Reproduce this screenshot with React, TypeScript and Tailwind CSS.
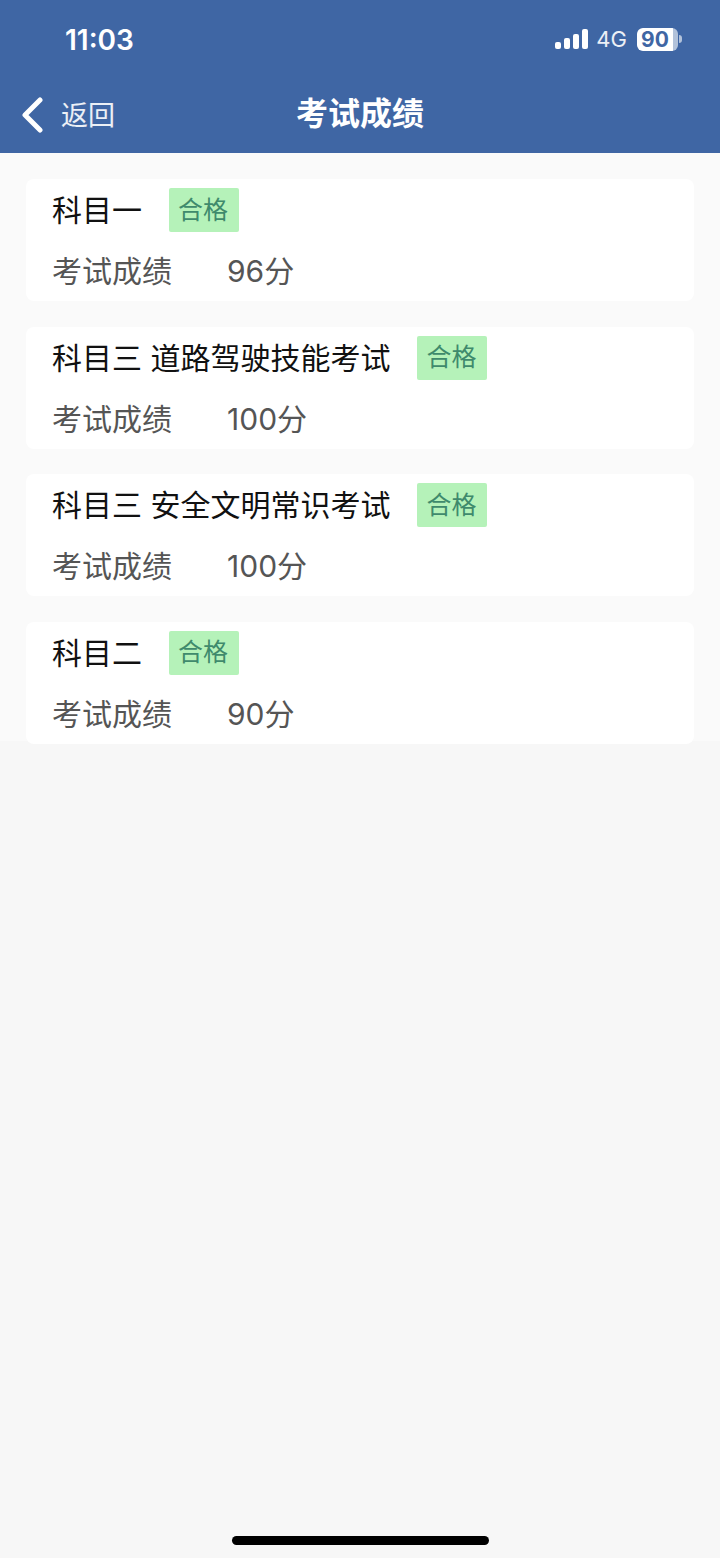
const results = [
  { name: '科目一', score: '96' },
  { name: '科目三 道路驾驶技能考试', score: '100' },
  { name: '科目三 安全文明常识考试', score: '100' },
  { name: '科目二', score: '90' },
]

const font = { fontFamily: 'Inter, "Noto Sans CJK SC", sans-serif' }

function StatusBar() {
  return (
    <div className="flex h-[78px] items-center justify-between pl-[65px] pr-[38px] text-white">
      <span className="pt-[2px] text-[28px] font-semibold leading-none">11:03</span>
      <div className="flex items-center">
        <svg width="33" height="20" viewBox="0 0 33 20" fill="white">
          <rect x="0" y="13" width="6" height="7" rx="2" />
          <rect x="9" y="9" width="6" height="11" rx="2" />
          <rect x="18" y="5" width="6" height="15" rx="2" />
          <rect x="27" y="0" width="6" height="20" rx="2" />
        </svg>
        <span className="ml-[8px] text-[22px] leading-none text-white/90">4G</span>
        <div className="relative ml-[10px] flex h-[23px] w-[41px] items-center overflow-hidden rounded-[6px] bg-white/60">
          <div className="flex h-full w-[36px] items-center justify-center rounded-l-[6px] bg-white">
            <span className="text-[21px] font-bold leading-none text-[#3f66a4]">90</span>
          </div>
        </div>
        <div className="ml-[1px] h-[8px] w-[3px] rounded-r-full bg-white/60" />
      </div>
    </div>
  )
}

function NavBar() {
  return (
    <div className="relative flex h-[75px] items-center justify-center text-white">
      <div className="absolute left-[21px] top-[19px] flex items-center">
        <svg width="22" height="36" viewBox="0 0 22 36" fill="none">
          <path d="M19 3 L4 18 L19 33" stroke="white" strokeWidth="5" strokeLinecap="round" strokeLinejoin="round" />
        </svg>
        <span className="ml-[18px] text-[27px] leading-none text-white/90">返回</span>
      </div>
      <span className="pb-[3px] text-[32px] font-bold leading-none">考试成绩</span>
    </div>
  )
}

function ResultCard({ name, score }: { name: string; score: string }) {
  return (
    <div className="h-[122px] shrink-0 rounded-[8px] bg-white pl-[26px]">
      <div className="flex items-center pt-[9px]">
        <span className="text-[30px] leading-[44px] text-[#111]">{name}</span>
        <span className="ml-[27px] flex h-[44px] w-[70px] items-center justify-center rounded-[2px] bg-[#b5f2b9] pr-[2px] text-[25px] leading-none text-[#3f8a6c]">
          合格
        </span>
      </div>
      <div className="mt-[17px] flex items-center text-[#555]">
        <span className="w-[175px] text-[30px] leading-[44px]">考试成绩</span>
        <span className="text-[30px] leading-[44px]">{score}分</span>
      </div>
    </div>
  )
}

export default function App() {
  return (
    <div className="relative flex min-h-[1558px] w-[720px] flex-col bg-[#f7f7f7]" style={font}>
      <header className="h-[153px] bg-[#3f66a4]">
        <StatusBar />
        <NavBar />
      </header>
      <main className="flex h-[588px] flex-col gap-[25.67px] bg-[#fafafa] px-[26px] pt-[26px]">
        {results.map((r) => (
          <ResultCard key={r.name} name={r.name} score={r.score} />
        ))}
      </main>
      <div className="absolute bottom-[13px] left-[232px] h-[9px] w-[257px] rounded-full bg-black" />
    </div>
  )
}
